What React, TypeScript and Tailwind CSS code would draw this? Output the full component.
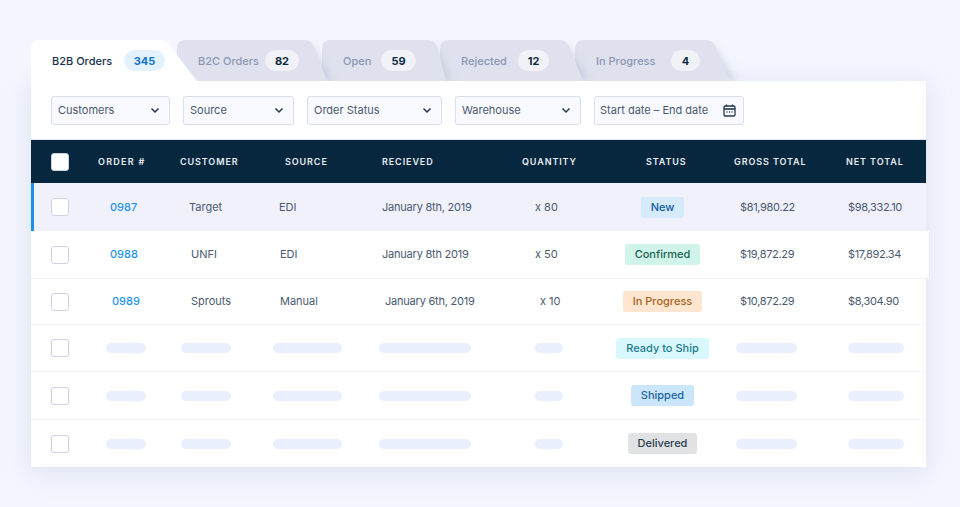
import React from "react";

const font = { fontFamily: "Inter, 'Noto Sans', sans-serif" };

type TabT = { label: string; count: string; w: number; ml: number; slope: number; lw: number; pw: number; z: string; active?: boolean };
const tabs: TabT[] = [
  { label: "B2B Orders", count: "345", w: 166, ml: 0, slope: 29, lw: 72, pw: 41, z: "z-50", active: true },
  { label: "B2C Orders", count: "82", w: 150, ml: -20, slope: 15, lw: 67, pw: 34, z: "z-40" },
  { label: "Open", count: "59", w: 124, ml: -5, slope: 11, lw: 38, pw: 35, z: "z-30" },
  { label: "Rejected", count: "12", w: 143, ml: -6, slope: 16, lw: 57, pw: 31, z: "z-20" },
  { label: "In Progress", count: "4", w: 155, ml: -8, slope: 17, lw: 75, pw: 29, z: "z-10" },
];

function Tab({ t }: { t: TabT }) {
  const r = 9;
  const tr = t.w - t.slope;
  const d = `M0,41 V${r} Q0,0 ${r},0 H${tr - 7} Q${tr - 1},0 ${tr + 2},6 L${t.w},41 Z`;
  const fid = `s${t.w}`;
  const shadow = `M${tr - 20},41 L${tr - 6},6 L${tr},6 L${t.w + 6},41 Z`;
  return (
    <div className={`relative h-[41px] shrink-0 ${t.z}`} style={{ width: t.w, marginLeft: t.ml }}>
      <svg className="absolute inset-0 overflow-visible" width={t.w} height={41} viewBox={`0 0 ${t.w} 41`}>
        {!t.active && (
          <defs>
            <filter id={fid} x="-30%" y="-30%" width="160%" height="160%">
              <feGaussianBlur stdDeviation="4" />
            </filter>
            <clipPath id={`c${t.w}`}>
              <rect x="0" y="0" width={t.w + 30} height="41" />
            </clipPath>
          </defs>
        )}
        {!t.active && (
          <g clipPath={`url(#c${t.w})`}>
            <path d={shadow} fill="#aeb5cf" opacity="0.5" filter={`url(#${fid})`} />
          </g>
        )}
        <path d={d} fill={t.active ? "#ffffff" : "#dfe2ee"} />
      </svg>
      <div className="relative flex h-[41px] items-center pl-[21px]">
        <span
          className={`whitespace-nowrap pt-px text-[11px] font-medium ${t.active ? "text-[#17324a]" : "text-[#8b96b3]"}`}
          style={{ width: t.lw }}
        >
          {t.label}
        </span>
        <span
          className={`flex h-[21px] items-center justify-center rounded-full pt-px text-[11px] font-bold ${
            t.active ? "bg-[#e3f2fe] text-[#1273c4]" : "bg-[#f0f2f8] text-[#0b2a42]"
          }`}
          style={{ width: t.pw }}
        >
          {t.count}
        </span>
      </div>
    </div>
  );
}

function Select({ label, w }: { label: string; w: string }) {
  return (
    <div className={`flex h-[29px] items-center justify-between rounded-[3px] border border-[#d9dff0] bg-[#f9faff] pl-[6px] pr-[9px] text-[11px] text-[#48586e] ${w}`}>
      <span className="whitespace-nowrap pt-px">{label}</span>
      <svg width="10" height="7" viewBox="0 0 10 7" fill="none" stroke="#24384f" strokeWidth="1.5">
        <path d="M1.5 1.5 L5 5 L8.5 1.5" />
      </svg>
    </div>
  );
}

const cols = "grid grid-cols-[59px_80px_100px_105px_135px_90px_125px_110px_91px] items-center";
const colsFirst = "grid grid-cols-[56px_80px_100px_105px_135px_90px_125px_110px_91px] items-center";

function Check({ ml = "ml-[20px]" }: { ml?: string }) {
  return <div className={`${ml} h-[18px] w-[18px] rounded-[3px] border-[1.5px] border-[#ccd3e8] bg-white`} />;
}

function Bar({ pl, w }: { pl: string; w: string }) {
  return (
    <div className={pl}>
      <div className={`h-[10px] rounded-full bg-[#e9effc] ${w}`} />
    </div>
  );
}

function Pill({ label, cls }: { label: string; cls: string }) {
  return (
    <div className="flex justify-center">
      <span className={`flex h-[21px] items-center whitespace-nowrap rounded-[3px] px-[10px] text-[11px] font-medium ${cls}`}>{label}</span>
    </div>
  );
}

function Cell({ pl, children, cls = "" }: { pl: string; children: React.ReactNode; cls?: string }) {
  return <div className={`whitespace-nowrap ${pl} ${cls}`}>{children}</div>;
}

const heads: [string, string][] = [
  ["ORDER #", "pl-[8px] tracking-[0.14em]"],
  ["CUSTOMER", "pl-[10px]"],
  ["SOURCE", "pl-[15px]"],
  ["RECIEVED", "pl-[7px]"],
  ["QUANTITY", "pl-[12px]"],
  ["STATUS", "pl-[46px]"],
  ["GROSS TOTAL", "pl-[9px]"],
  ["NET TOTAL", "pl-[11px]"],
];

const link = "font-medium text-[#1d93ee]";

function DataRow({
  v,
  pls,
  pill,
  cls,
  first,
}: {
  v: string[];
  pls: string[];
  pill: React.ReactNode;
  cls: string;
  first?: boolean;
}) {
  return (
    <div className={`${first ? colsFirst : cols} text-[11px] text-[#4a5a70] ${cls}`}>
      <Check ml={first ? "ml-[17px]" : "ml-[20px]"} />
      <Cell pl={pls[0]} cls={link}>{v[0]}</Cell>
      <Cell pl={pls[1]}>{v[1]}</Cell>
      <Cell pl={pls[2]}>{v[2]}</Cell>
      <Cell pl={pls[3]} cls="tracking-[-0.02em]">{v[3]}</Cell>
      <Cell pl={pls[4]}>{v[4]}</Cell>
      {pill}
      <Cell pl="pl-[15px]" cls="tracking-[-0.03em]">{v[5]}</Cell>
      <Cell pl="pl-[13px]" cls="tracking-[-0.03em]">{v[6]}</Cell>
    </div>
  );
}

function SkeletonRow({ pill, cls }: { pill: React.ReactNode; cls: string }) {
  return (
    <div className={`${cols} ${cls}`}>
      <Check />
      <Bar pl="pl-[16px]" w="w-[40px]" />
      <Bar pl="pl-[11px]" w="w-[50px]" />
      <Bar pl="pl-[3px]" w="w-[69px]" />
      <Bar pl="pl-[4px]" w="w-[92px]" />
      <Bar pl="pl-[25px]" w="w-[28px]" />
      {pill}
      <Bar pl="pl-[11px]" w="w-[61px]" />
      <Bar pl="pl-[13px]" w="w-[56px]" />
    </div>
  );
}

export default function App() {
  return (
    <div className="h-[507px] w-[960px] overflow-hidden bg-[#f3f6fe] pl-[31px] pt-[40px]" style={font}>
      <div className="relative z-10 flex w-[895px]">
        {tabs.map((t) => (
          <Tab key={t.label} t={t} />
        ))}
      </div>
      <div className="relative w-[895px] bg-white shadow-[0_4px_24px_rgba(160,170,210,0.28)]">
        <div className="flex h-[59px] items-center gap-[13px] border-b border-[#e4e7ef] pl-[20px]">
          <Select label="Customers" w="w-[119px]" />
          <Select label="Source" w="w-[111px]" />
          <Select label="Order Status" w="w-[135px]" />
          <Select label="Warehouse" w="w-[126px]" />
          <div className="flex h-[29px] w-[150px] items-center justify-between rounded-[3px] border border-[#d9dff0] bg-[#f9faff] pl-[5px] pr-[7px] text-[11px] text-[#48586e]">
            <span className="whitespace-nowrap pt-px">Start date – End date</span>
            <svg width="13" height="13" viewBox="0 0 13 13" fill="none" stroke="#24384f" strokeWidth="1.3">
              <rect x="1" y="2" width="11" height="10" rx="1.2" />
              <path d="M1 5 H12" strokeWidth="1.6" />
              <path d="M3.5 0.5 V2.5 M9.5 0.5 V2.5" />
              <path d="M3.5 8 H4.5 M6 8 H7 M8.5 8 H9.5" />
            </svg>
          </div>
        </div>
        <div className={`${cols} h-[43px] bg-[#07273e] text-[9px] font-semibold tracking-[0.1em] text-[#e8ecf2]`}>
          <div className="ml-[20px] h-[18px] w-[18px] rounded-[3px] border-[1.5px] border-[#c9d1e2] bg-white" />
          {heads.map(([h, pl]) => (
            <div key={h} className={`whitespace-nowrap ${pl}`}>
              {h}
            </div>
          ))}
        </div>
        <DataRow
          first
          cls="h-[48px] border-l-[3px] border-[#1a90ec] bg-[#f1f1fc]"
          v={["0987", "Target", "EDI", "January 8th, 2019", "x 80", "$81,980.22", "$98,332.10"]}
          pls={["pl-[20px]", "pl-[19px]", "pl-[9px]", "pl-[7px]", "pl-[25px]"]}
          pill={<Pill label="New" cls="bg-[#d5eafb] text-[#115d9b]" />}
        />
        <DataRow
          cls="relative -mr-[3px] h-[48px] border-b border-[#eef1f8] bg-white"
          v={["0988", "UNFI", "EDI", "January 8th 2019", "x 50", "$19,872.29", "$17,892.34"]}
          pls={["pl-[20px]", "pl-[21px]", "pl-[10px]", "pl-[7px]", "pl-[25px]"]}
          pill={<Pill label="Confirmed" cls="bg-[#d0f4ea] text-[#1c6152]" />}
        />
        <DataRow
          cls="h-[46px] border-b border-[#f2f4fa]"
          v={["0989", "Sprouts", "Manual", "January 6th, 2019", "x 10", "$10,872.29", "$8,304.90"]}
          pls={["pl-[22px]", "pl-[21px]", "pl-[10px]", "pl-[10px]", "pl-[30px]"]}
          pill={<Pill label="In Progress" cls="bg-[#fde5d0] text-[#a8641c]" />}
        />
        <SkeletonRow cls="h-[47px] border-b border-[#f2f4fa]" pill={<Pill label="Ready to Ship" cls="bg-[#d9f8fe] text-[#1b7a8c]" />} />
        <SkeletonRow cls="h-[48px] border-b border-[#f2f4fa]" pill={<Pill label="Shipped" cls="bg-[#cbe6fb] text-[#1a649f]" />} />
        <SkeletonRow cls="h-[47px]" pill={<Pill label="Delivered" cls="bg-[#e0e2e4] text-[#2c3c50]" />} />
      </div>
    </div>
  );
}
